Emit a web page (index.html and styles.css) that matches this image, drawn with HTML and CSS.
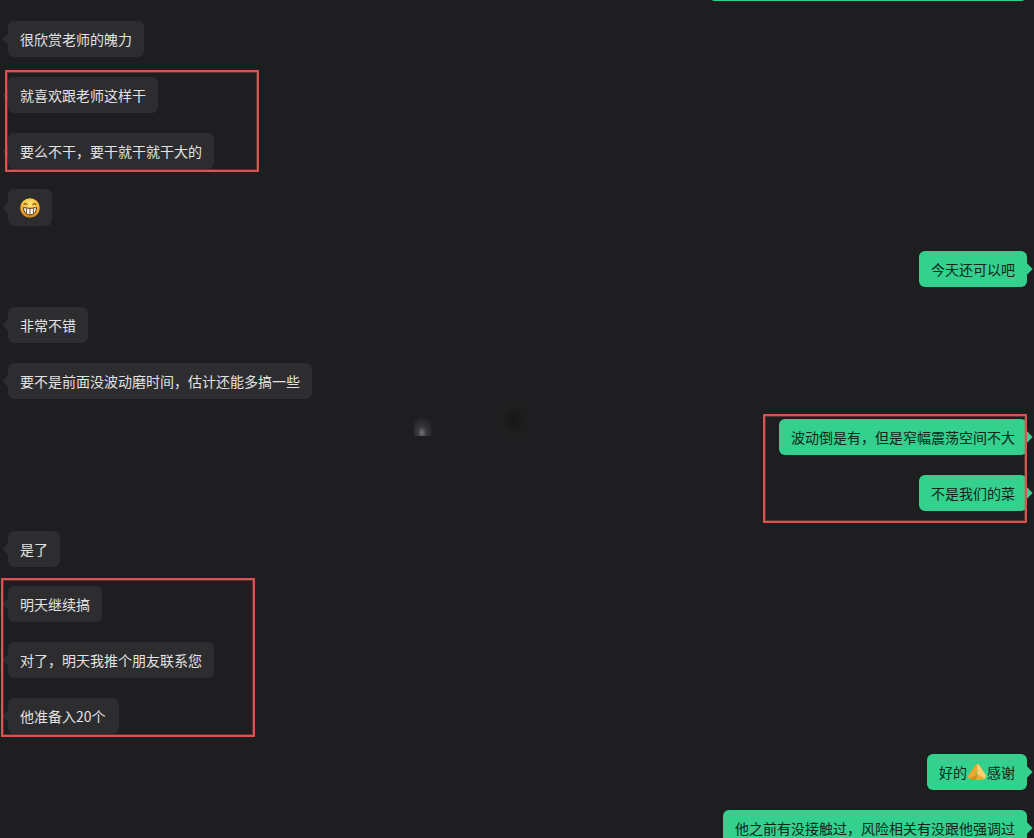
FILE: index.html
```html
<!DOCTYPE html>
<html lang="zh-CN">
<head>
    <meta charset="UTF-8">
    <title>Chat</title>
    <link rel="stylesheet" href="styles.css">
</head>
<body>
    <main class="chat">
        <div class="msg right first"><div class="bubble"></div></div>

        <div class="msg"><div class="bubble">很欣赏老师的魄力</div></div>
        <div class="msg"><div class="bubble">就喜欢跟老师这样干</div></div>
        <div class="msg"><div class="bubble">要么不干，要干就干就干大的</div></div>
        <div class="msg"><div class="bubble emoji-bubble">
            <svg class="emoji" viewBox="0 0 20 20">
                <defs>
                    <radialGradient id="face" cx="50%" cy="30%" r="70%">
                        <stop offset="0" stop-color="#ffe67a"/>
                        <stop offset=".65" stop-color="#f5b52e"/>
                        <stop offset="1" stop-color="#c97a1a"/>
                    </radialGradient>
                </defs>
                <circle cx="10" cy="10" r="9.8" fill="url(#face)"/>
                <path d="M3.8 7q1.8-3 3.6 0M12.6 7q1.8-3 3.6 0" fill="none" stroke="#6b3f0e" stroke-width="1.2"/>
                <path d="M3.4 9.6q6.6 1.6 13.2 0q-.4 6.8-6.6 7.4q-6.2-.6-6.6-7.4z" fill="#fff" stroke="#5e370c" stroke-width="1"/>
                <path d="M6.6 10.4v5.4M10 10.8v6M13.4 10.4v5.4" stroke="#5e370c" stroke-width=".9"/>
            </svg>
        </div></div>

        <div class="msg right late"><div class="bubble">今天还可以吧</div></div>

        <div class="msg"><div class="bubble">非常不错</div></div>
        <div class="msg"><div class="bubble">要不是前面没波动磨时间，估计还能多搞一些</div></div>

        <div class="msg right"><div class="bubble">波动倒是有，但是窄幅震荡空间不大</div></div>
        <div class="msg right"><div class="bubble">不是我们的菜</div></div>

        <div class="msg"><div class="bubble">是了</div></div>
        <div class="msg tight"><div class="bubble">明天继续搞</div></div>
        <div class="msg"><div class="bubble">对了，明天我推个朋友联系您</div></div>
        <div class="msg"><div class="bubble wide-digits">他准备入20个</div></div>

        <div class="msg right"><div class="bubble">好的<svg class="hands" viewBox="0 0 20 18">
            <path d="M11 1 L9 1.5 L.5 13.5 L2.5 16 L9.5 12.5z" fill="#eda72f"/>
            <path d="M10 2 L11.5 1 L19.5 13 L17.5 16 L10.5 11.5z" fill="#fbd06a"/>
            <path d="M2.5 16 L9.5 11.5 L10.5 15 L8 17 L4 17z" fill="#d98a1e"/>
            <path d="M10.5 11.5 L17.5 15 L16 17 L9 17z" fill="#f0a936"/>
        </svg>感谢</div></div>
        <div class="msg right"><div class="bubble">他之前有没接触过，风险相关有没跟他强调过</div></div>
    </main>

    <!-- red marks drawn over the screenshot -->
    <div class="mark mark-a"></div>
    <div class="mark mark-b"></div>
    <div class="mark mark-c"></div>

    <div class="smudge"></div>
    <div class="smudge-dark"></div>
</body>
</html>
```

FILE: styles.css
```css
* {
    margin: 0;
    padding: 0;
    box-sizing: border-box;
}

html, body {
    height: 838px;
    overflow: hidden;
}

body {
    position: relative;
    background-color: #1e1e20;
    font-family: "Noto Sans CJK SC", "Liberation Sans", sans-serif;
    font-size: 14px;
}

.chat {
    display: flex;
    flex-direction: column;
    gap: 20px;
    margin-top: -35px;
    padding: 0 7px 0 8px;
}

.msg {
    display: flex;
}

.msg.right {
    justify-content: flex-end;
}

.msg.late {
    margin-top: 5px;
}

.msg.tight {
    margin-top: -1px;
}

.bubble {
    position: relative;
    height: 36px;
    padding: 0 12px;
    display: flex;
    align-items: center;
    line-height: 20px;
    white-space: nowrap;
    border-radius: 6px;
    background-color: #2d2d30;
    color: #e2e2e2;
}

.bubble::after {
    content: "";
    position: absolute;
    top: 50%;
    left: -4px;
    width: 8px;
    height: 8px;
    margin-top: -4px;
    background-color: inherit;
    transform: rotate(45deg);
}

.right .bubble {
    background-color: #34d08d;
    color: #0e261c;
}

.right .bubble::after {
    left: auto;
    right: -4px;
}

.first .bubble {
    width: 318px;
}

.wide-digits {
    padding-right: 13px;
}

.emoji-bubble {
    height: 37px;
}

.emoji {
    width: 20px;
    height: 20px;
}

.hands {
    width: 20px;
    height: 18px;
}

.mark {
    position: absolute;
    border: 2px solid #d9544f;
    border-radius: 1px;
    box-shadow: inset 0 0 0 1px rgba(214, 90, 88, 0.35);
}

.mark-a {
    left: 5px;
    top: 70px;
    width: 254px;
    height: 102px;
}

.mark-b {
    left: 763px;
    top: 414px;
    width: 264px;
    height: 109px;
}

.mark-c {
    left: 1px;
    top: 578px;
    width: 254px;
    height: 159px;
}

/* blurred watermark in the middle */
.smudge {
    position: absolute;
    left: 414px;
    top: 416px;
    width: 20px;
    height: 20px;
    background: radial-gradient(ellipse at 40% 85%, #77777a, #3a3a3c 25%, #1e1e20 70%);
}

.smudge-dark {
    position: absolute;
    left: 508px;
    top: 412px;
    width: 12px;
    height: 16px;
    background: #141416;
    opacity: 0.6;
    filter: blur(3px);
}
```
